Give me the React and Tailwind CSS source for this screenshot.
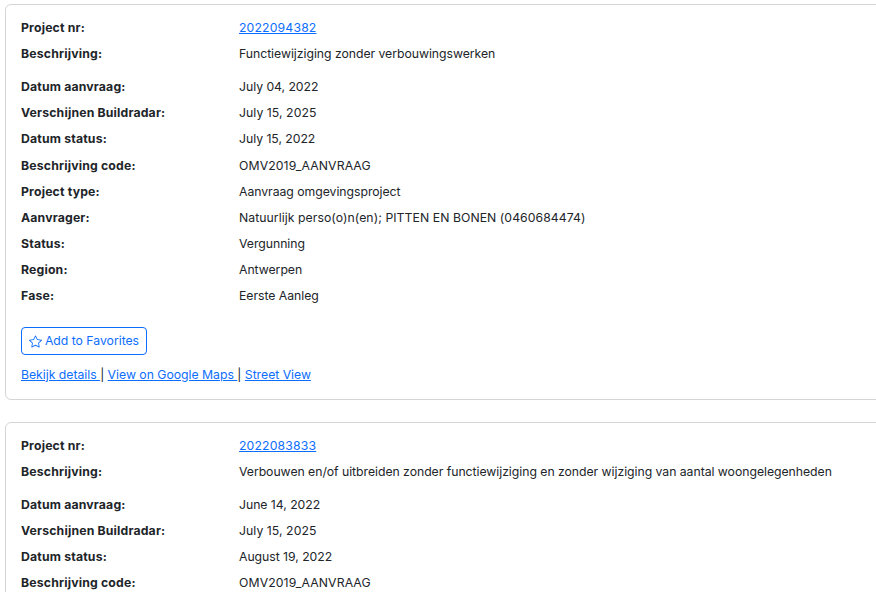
import React from 'react';

const Star = () => (
  <svg width="13" height="13" viewBox="0 0 16 16" fill="currentColor" className="shrink-0">
    <path d="M2.866 14.85c-.078.444.36.791.746.593l4.39-2.256 4.389 2.256c.386.198.824-.149.746-.592l-.83-4.73 3.522-3.356c.33-.314.16-.888-.282-.95l-4.898-.696L8.465.792a.513.513 0 0 0-.927 0L5.354 5.12l-4.898.696c-.441.062-.612.636-.283.95l3.523 3.356-.83 4.73zm4.905-2.767-3.686 1.894.694-3.957a.565.565 0 0 0-.163-.505L1.71 6.745l4.052-.576a.525.525 0 0 0 .393-.288L8 2.223l1.847 3.658a.525.525 0 0 0 .393.288l4.052.575-2.906 2.77a.565.565 0 0 0-.163.506l.694 3.957-3.686-1.894a.503.503 0 0 0-.461 0z" />
  </svg>
);

const Row = ({ label, children, className = '', valueClass = 'tracking-[-0.04px]' }) => (
  <div className={`flex h-[26.15px] items-center ${className}`}>
    <div className="w-[218px] shrink-0 font-bold tracking-[0.17px]">{label}</div>
    <div className={`whitespace-nowrap ${valueClass}`}>{children}</div>
  </div>
);

const ProjectLink = ({ children }) => (
  <a href="#" className="text-[#0d6efd] underline">{children}</a>
);

const projects = [
  {
    nr: '2022094382',
    desc: 'Functiewijziging zonder verbouwingswerken',
    aanvraag: 'July 04, 2022',
    status: 'July 15, 2022',
    type: 'Aanvraag omgevingsproject',
    aanvrager: 'Natuurlijk perso(o)n(en); PITTEN EN BONEN (0460684474)',
    stat: 'Vergunning',
    region: 'Antwerpen',
    fase: 'Eerste Aanleg',
  },
  {
    nr: '2022083833',
    desc: 'Verbouwen en/of uitbreiden zonder functiewijziging en zonder wijziging van aantal woongelegenheden',
    aanvraag: 'June 14, 2022',
    status: 'August 19, 2022',
    type: 'Aanvraag omgevingsproject',
    aanvrager: 'Natuurlijk perso(o)n(en)',
    stat: 'Vergunning',
    region: 'Antwerpen',
    fase: 'Eerste Aanleg',
  },
];

const ProjectCard = ({ p }) => (
  <div className="w-[900px] rounded-md border border-[#d5d5d5] bg-white px-[15px] pt-[10px] pb-[15px]">
    <Row label="Project nr:" valueClass="tracking-[0.15px]"><ProjectLink>{p.nr}</ProjectLink></Row>
    <Row label="Beschrijving:" className="mb-[7px]">{p.desc}</Row>
    <Row label="Datum aanvraag:">{p.aanvraag}</Row>
    <Row label="Verschijnen Buildradar:" valueClass="tracking-[0.05px]">July 15, 2025</Row>
    <Row label="Datum status:">{p.status}</Row>
    <Row label="Beschrijving code:" valueClass="tracking-[0.1px]">OMV2019_AANVRAAG</Row>
    <Row label="Project type:">{p.type}</Row>
    <Row label="Aanvrager:" valueClass="tracking-[0.05px]">{p.aanvrager}</Row>
    <Row label="Status:">{p.stat}</Row>
    <Row label="Region:">{p.region}</Row>
    <Row label="Fase:">{p.fase}</Row>
    <button className="mt-[17px] flex h-[28px] w-[126px] items-center justify-center gap-[3px] rounded border border-[#0d6efd] pt-px tracking-[-0.02px] text-[#0d6efd]">
      <Star />
      Add to Favorites
    </button>
    <div className="mt-[11px] h-[18px] leading-[18px] tracking-[-0.02px]">
      <ProjectLink>Bekijk details </ProjectLink> | <ProjectLink>View on Google Maps </ProjectLink> | <ProjectLink>Street View</ProjectLink>
    </div>
  </div>
);

export default function App() {
  return (
    <div className="h-[592px] w-[876px] overflow-hidden bg-white pt-1 pl-[5px] font-['Inter',sans-serif] text-[12.25px] text-[#212529]">
      <div className="flex flex-col gap-[22.25px]">
        {projects.map((p) => <ProjectCard key={p.nr} p={p} />)}
      </div>
    </div>
  );
}
